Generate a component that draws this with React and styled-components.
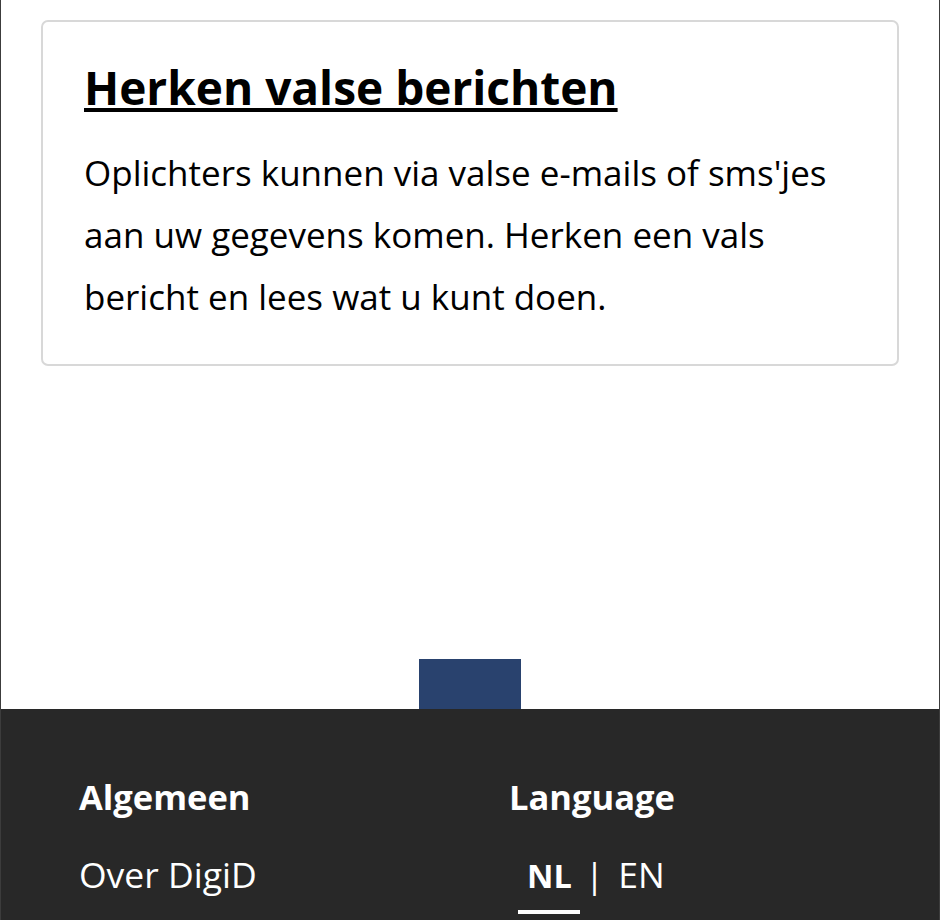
import React from 'react'
import styled, { createGlobalStyle } from 'styled-components'

const GlobalStyle = createGlobalStyle`
    html, body {
        margin: 0;
        padding: 0;
        background: #ffffff;
    }
    body {
        font-family: "Open Sans", "Noto Sans", sans-serif;
        color: #000000;
    }
`

const Page = styled.div`
    min-height: 920px;
    border-left: 1px solid #3c3c3c;
    border-right: 1px solid #3c3c3c;
    display: flex;
    flex-direction: column;
    overflow: hidden;
`

const Main = styled.main`
    padding: 20px 40px 0;
`

const Card = styled.a`
    display: block;
    border: 2px solid #d8d8d8;
    border-radius: 7px;
    padding: 30px 41px 36px;
    color: #000000;
    text-decoration: none;
`

const CardTitle = styled.h2`
    margin: 0 0 20px;
    font-size: 46px;
    font-weight: 700;
    line-height: 70px;
    text-decoration: underline;
    text-underline-offset: 3px;
    text-decoration-thickness: 4px;
`

const CardText = styled.p`
    margin: 0;
    font-size: 35px;
    line-height: 62px;
`

const Spacer = styled.div`
    height: 343px;
    display: flex;
    align-items: flex-end;
    justify-content: center;
`

const TopButton = styled.a`
    display: block;
    width: 102px;
    height: 50px;
    background: #29426e;
`

const Footer = styled.footer`
    background: #282828;
    color: #ffffff;
    flex: 1;
    padding: 64px 78px 0;
    display: grid;
    grid-template-columns: 430px 1fr;
`

const Column = styled.div`
    display: flex;
    flex-direction: column;
`

const Heading = styled.h3`
    margin: 0 0 29px;
    font-size: 34.5px;
    font-weight: 700;
    line-height: 48px;
`

const FooterLink = styled.a`
    color: #ffffff;
    text-decoration: none;
    font-size: 35.5px;
    line-height: 48px;
`

const Languages = styled.div`
    display: flex;
    align-items: baseline;
    gap: 5px;
    padding-left: 9px;
    font-size: 35.5px;
    line-height: 48px;
`

const Lang = styled.a`
    color: #ffffff;
    text-decoration: none;
    font-size: ${(props) => (props.active ? '32.5px' : '35.5px')};
    font-weight: ${(props) => (props.active ? 700 : 400)};
    padding: 0 8px 10px 9px;
    border-bottom: 4px solid ${(props) => (props.active ? '#ffffff' : 'transparent')};
`

const Divider = styled.span`
    color: #ffffff;
`

const App = () => {
    return (
        <>
            <GlobalStyle />
            <Page>
                <Main>
                    <Card href="#">
                        <CardTitle>Herken valse berichten</CardTitle>
                        <CardText>
                            Oplichters kunnen via valse e-mails of sms'jes aan uw gegevens komen. Herken een vals bericht en lees wat u kunt doen.
                        </CardText>
                    </Card>
                </Main>
                <Spacer>
                    <TopButton href="#" aria-label="Naar boven" />
                </Spacer>
                <Footer>
                    <Column>
                        <Heading>Algemeen</Heading>
                        <FooterLink href="#">Over DigiD</FooterLink>
                    </Column>
                    <Column>
                        <Heading>Language</Heading>
                        <Languages>
                            <Lang href="#" active>NL</Lang>
                            <Divider>|</Divider>
                            <Lang href="#">EN</Lang>
                        </Languages>
                    </Column>
                </Footer>
            </Page>
        </>
    )
}

export default App
